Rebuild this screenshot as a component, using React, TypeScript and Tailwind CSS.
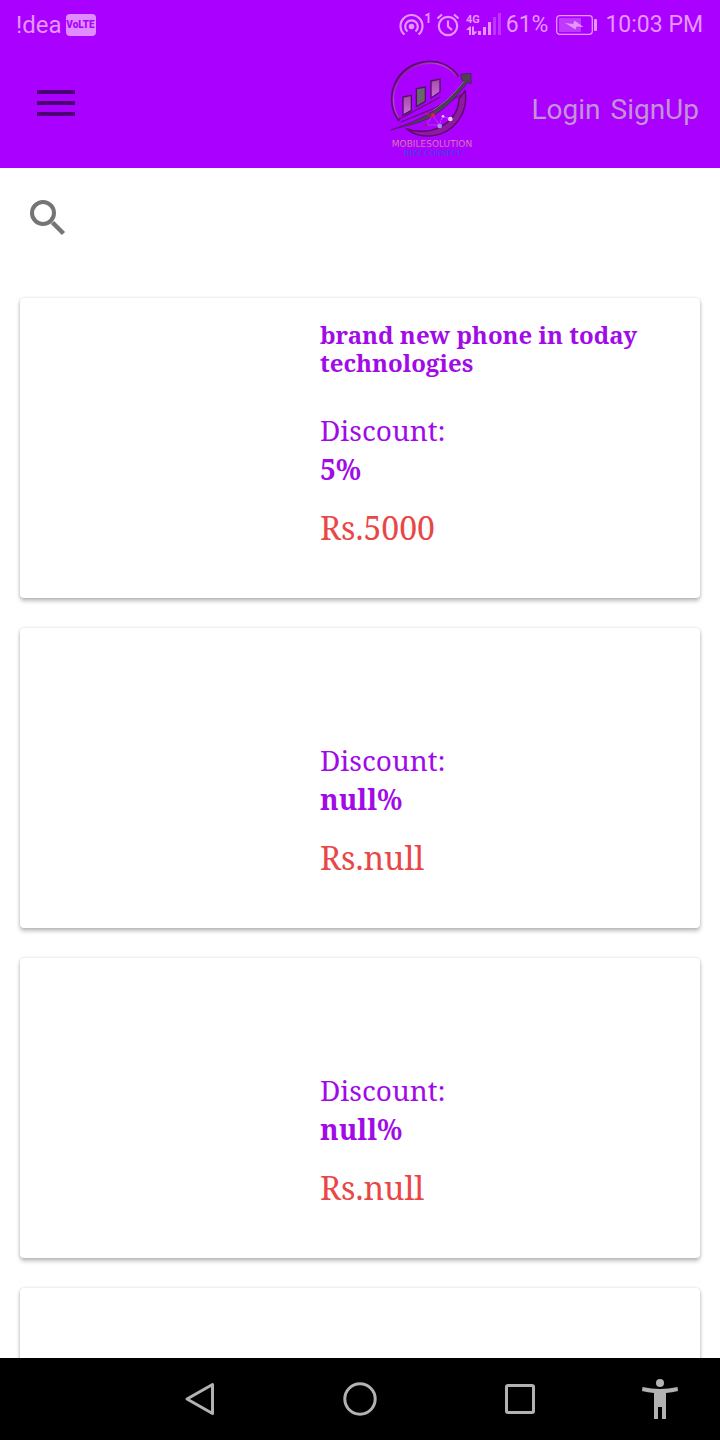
type Product = { id: number; title?: string; discount?: string; price?: string };

const products: Product[] = [
  { id: 1, title: 'brand new phone in today technologies', discount: '5', price: '5000' },
  { id: 2, discount: 'null', price: 'null' },
  { id: 3, discount: 'null', price: 'null' },
  { id: 4 },
];

function HotspotIcon() {
  return (
    <svg viewBox="0 0 33 26" className="h-[26px] w-[33px]" fill="none" stroke="currentColor" strokeWidth="2.200" aria-hidden="true">
      <path d="M5.500 22.500A11 11 0 1 1 19.500 22.500" />
      <path d="M8.500 19.500A6.300 6.300 0 1 1 16.500 19.500" />
      <circle cx="12.500" cy="14.500" r="2.800" fill="currentColor" stroke="none" />
      <path d="M26.500 3.500L29.500 2V11" strokeWidth="1.800" />
    </svg>
  );
}

function AlarmIcon() {
  return (
    <svg viewBox="0 0 24 24" className="size-6" fill="none" stroke="currentColor" strokeWidth="2.200" aria-hidden="true">
      <circle cx="12" cy="13" r="9.200" />
      <path d="M12 7.500v6l4 3.500M1.500 5.500L6 1.500M22.500 5.500L18 1.500" />
    </svg>
  );
}

function SignalIcon() {
  return (
    <svg viewBox="0 0 36 26" className="h-[26px] w-9" fill="currentColor" aria-hidden="true">
      <text x="0" y="11" fontSize="11" fontWeight="700" className="font-['Roboto',sans-serif]">4G</text>
      <path d="M0 18L3.500 14.500H5V23H3V18H0zM6 14.500H8V19.500H11.500L8 23H6z" />
      <rect x="12" y="19" width="3" height="4" />
      <rect x="17" y="15" width="3" height="8" />
      <rect x="22" y="10" width="3" height="13" />
      <rect x="27" y="5" width="3" height="18" opacity=".35" />
      <rect x="32" y="1" width="3" height="22" opacity=".35" />
    </svg>
  );
}

function BatteryIcon() {
  return (
    <svg viewBox="0 0 41 20" className="h-5 w-[41px]" aria-hidden="true">
      <rect x=".7" y=".7" width="35.600" height="18.600" rx="3" fill="none" stroke="currentColor" strokeWidth="1.300" />
      <rect x="3" y="3" width="22" height="14" fill="currentColor" opacity=".38" />
      <rect x="38" y="4" width="3" height="12" rx="1" fill="currentColor" />
      <path d="M9 8L17 9L18.500 5.500L27.500 12L20.500 11.500L19.500 14.500z" fill="currentColor" />
    </svg>
  );
}

function Logo() {
  return (
    <svg viewBox="30 30 252 294" className="h-[98px] w-[84px]" role="img" aria-label="Mobilesolution Bizz Connect">
      <defs>
        <linearGradient id="ring" x1="0" y1="0" x2="1" y2="1">
          <stop offset="0" stopColor="#6d0879" />
          <stop offset=".35" stopColor="#b73dd6" />
          <stop offset="1" stopColor="#6c0872" />
        </linearGradient>
        <linearGradient id="mauve" x1="0" y1="0" x2="0" y2="1">
          <stop offset="0" stopColor="#a449a8" />
          <stop offset="1" stopColor="#cb72dd" />
        </linearGradient>
        <linearGradient id="lettering" x1="0" y1="0" x2="0" y2="1">
          <stop offset="0" stopColor="#e184b0" />
          <stop offset="1" stopColor="#c966a4" />
        </linearGradient>
      </defs>
      <g fill="none" strokeLinejoin="round">
        <path d="M58 212C10 145 47 46 138 37C179 32 214 51 234 80" stroke="#5d0776" strokeWidth="9" />
        <path d="M57 205C17 145 50 51 138 40C177 35 210 52 230 80" stroke="url(#ring)" strokeWidth="5" />
        <path d="M79 236C118 268 190 268 230 218C252 191 261 156 255 122L237 147C236 193 201 230 153 241C124 246 99 244 79 236z" fill="#8d1ba0" stroke="#5c0764" strokeWidth="4" />
        <path d="M54 209L146 160L181 141M63 216L162 175L249 132" stroke="#67107c" strokeWidth="4" />
      </g>
      <g stroke="#4d1460" strokeWidth="4">
        <path d="M69 141L94 136V181L69 195z" fill="url(#mauve)" />
        <path d="M109 116L136 111V154L109 170z" fill="#6b6570" />
        <path d="M153 93L180 87V126L153 144z" fill="url(#mauve)" />
      </g>
      <path d="M33 240C83 221 119 210 157 185C192 163 221 134 251 98L244 86L243 73L273 70V102L264 96C228 142 195 177 155 200C119 220 78 227 33 240z" fill="#4c4252" stroke="#4b1458" strokeWidth="2" />
      <path d="M159 181C194 160 224 129 252 94" fill="none" stroke="#80718b" strokeWidth="3" />
      <path d="M158 195L139 225H178L158 195" fill="none" stroke="#a65be5" strokeWidth="2" />
      <path d="M178 225L188 199L211 207" fill="none" stroke="#c79bee" strokeWidth="2" strokeDasharray="5 3" />
      <path d="M136 193L147 190M158 195L151 204" stroke="#c51c58" strokeWidth="5" />
      <circle cx="159" cy="195" r="6" fill="#d52445" />
      <circle cx="138" cy="225" r="5" fill="#a5147b" />
      <circle cx="179" cy="228" r="7" fill="#a790f7" />
      <circle cx="189" cy="199" r="4" fill="#e5cdf5" />
      <circle cx="211" cy="207" r="7" fill="#ead5ef" />
      <text x="156" y="292" textAnchor="middle" fontSize="27" fill="url(#lettering)" className="font-['DejaVu_Sans',sans-serif]">MOBILESOLUTION</text>
      <text x="158" y="317" textAnchor="middle" fontSize="25" fontWeight="700" fill="#4a3ce6" className="font-['Liberation_Serif',serif]">
        B<tspan fontSize="22">IZZ</tspan> C<tspan fontSize="22">ONNECT</tspan>
      </text>
    </svg>
  );
}

function StatusBar() {
  return (
    <div className="flex h-12 items-center justify-between pt-px pr-[17px] pl-4 text-[23px] leading-6 text-[#e496ff]">
      <div className="flex items-center gap-1">
        <span className="text-2xl">!dea</span>
        <span className="flex h-[22px] w-[30px] items-center justify-center rounded bg-[#e08cff] text-[10px] font-black text-[#aa00ff]">
          VoLTE
        </span>
      </div>
      <div className="flex items-center">
        <HotspotIcon />
        <span className="ml-1"><AlarmIcon /></span>
        <span className="ml-1.5"><SignalIcon /></span>
        <span className="ml-1">61%</span>
        <span className="ml-2"><BatteryIcon /></span>
        <span className="ml-2">10:03 PM</span>
      </div>
    </div>
  );
}

function ProductCard({ product }: { product: Product }) {
  return (
    <article className="flex h-[300px] shrink-0 rounded bg-white pt-[23px] shadow-[0_3px_4px_rgba(0,0,0,0.26),0_0_3px_rgba(0,0,0,0.14)]">
      <div className="w-[300px] shrink-0" />
      <div className="min-w-0 flex-1 pr-10 font-['Noto_Serif','DejaVu_Serif_Condensed','DejaVu_Serif',serif] text-[#a10be8]">
        <h2 className="h-14 text-2xl leading-7 font-bold">{product.title}</h2>
        {product.discount && (
          <p className="mt-[34px] text-[28px] leading-[39px]">
            Discount:
            <strong className="block font-bold">{product.discount}%</strong>
          </p>
        )}
        {product.price && <p className="mt-5 text-[32px] leading-[38px] text-[#e94747]">Rs.{product.price}</p>}
      </div>
    </article>
  );
}

export default function App() {
  return (
    <div className="flex h-screen flex-col bg-white font-['Roboto',sans-serif]">
      <header className="shrink-0 bg-[#aa00ff]">
        <StatusBar />
        <div className="flex h-[120px] items-start pr-[21px] pl-9">
          <button type="button" aria-label="Menu" className="mt-10 text-[#4c0073]">
            <svg viewBox="0 0 40 30" className="h-[30px] w-10" fill="currentColor" aria-hidden="true">
              <path d="M1 2h38v4H1zM1 13h38v4H1zM1 24h38v4H1z" />
            </svg>
          </button>
          <div className="mt-3 mr-[57px] ml-auto"><Logo /></div>
          <nav className="mt-11 flex gap-2.5 text-[28px] leading-9 text-[#c294d4]">
            <a href="#login">Login</a>
            <a href="#signup">SignUp</a>
          </nav>
        </div>
      </header>
      <main className="min-h-0 flex-1 overflow-y-auto [scrollbar-width:none]">
        <div className="flex h-[130px] items-start px-7 pt-7">
          <button type="button" aria-label="Search" className="text-[#757575]">
            <svg viewBox="0 0 40 42" className="h-[42px] w-10" fill="none" stroke="currentColor" aria-hidden="true">
              <circle cx="15" cy="17" r="11" strokeWidth="4" />
              <path d="M24.500 26.500l11 11" strokeWidth="4.500" />
            </svg>
          </button>
        </div>
        <div className="flex flex-col gap-[30px] px-5 pb-[30px]">
          {products.map((product) => (
            <ProductCard key={product.id} product={product} />
          ))}
        </div>
      </main>
      <nav aria-label="System navigation" className="flex h-[82px] shrink-0 items-center justify-end bg-black pr-5 text-[#b2b2b2]">
        <button type="button" aria-label="Back" className="flex w-40 justify-center">
          <svg viewBox="0 0 40 40" className="size-10" fill="none" stroke="currentColor" strokeWidth="3" strokeLinejoin="round" aria-hidden="true">
            <path d="M32.500 5.500V34.500L7 20z" />
          </svg>
        </button>
        <button type="button" aria-label="Home" className="flex w-40 justify-center">
          <svg viewBox="0 0 40 40" className="size-10" fill="none" stroke="currentColor" strokeWidth="3" aria-hidden="true">
            <circle cx="20" cy="20" r="15.200" />
          </svg>
        </button>
        <button type="button" aria-label="Recent apps" className="flex w-40 justify-center">
          <svg viewBox="0 0 40 40" className="size-10" fill="none" stroke="currentColor" strokeWidth="3" aria-hidden="true">
            <rect x="6.500" y="6.500" width="27" height="27" rx="1.500" />
          </svg>
        </button>
        <button type="button" aria-label="Accessibility" className="ml-5 flex w-20 justify-center">
          <svg viewBox="0 0 40 40" className="size-10" fill="currentColor" aria-hidden="true">
            <circle cx="20" cy="4" r="4" />
            <path d="M2.500 8Q20 12 37.500 8L38 12Q32 13.500 26 14V40H22V28H18V40H14V14Q8 13.500 2 12z" />
          </svg>
        </button>
      </nav>
    </div>
  );
}
